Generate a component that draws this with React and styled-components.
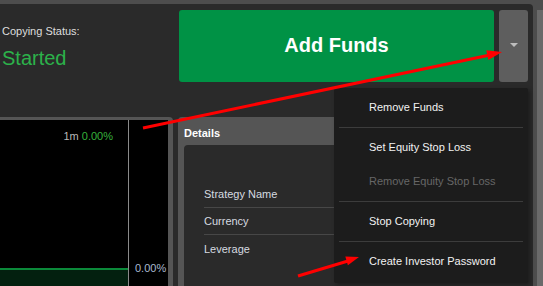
import styled, { createGlobalStyle } from 'styled-components';

const Global = createGlobalStyle`
  html, body {
    margin: 0;
    padding: 0;
    background: #4d4d4d;
    overflow: hidden;
    font-family: "Liberation Sans", Arial, sans-serif;
  }
`;

const Page = styled.div`
  position: relative;
  display: flex;
  width: 543px;
  height: 286px;
  padding-top: 4px;
  box-sizing: border-box;
`;

const Main = styled.div`
  width: 533px;
  background: #2a2a2a;
  border-radius: 0 4px 0 0;
  display: flex;
  flex-direction: column;
  overflow: hidden;
`;

const Scrollbar = styled.div`
  margin: 6px 0 0 4px;
  width: 6px;
  background: #6a6a6a;
`;

const TopRow = styled.div`
  display: flex;
  height: 113px;
`;

const Status = styled.div`
  width: 177px;
  padding: 21px 0 0 2px;
  display: flex;
  flex-direction: column;
  gap: 9px;
`;

const StatusLabel = styled.div`
  font-size: 11px;
  line-height: 13px;
  color: #dedede;
`;

const StatusValue = styled.div`
  font-size: 20px;
  line-height: 22px;
  color: #2cb24a;
`;

const Actions = styled.div`
  display: flex;
  gap: 5px;
  padding-top: 6px;
  height: 72px;
`;

const AddButton = styled.button`
  width: 315px;
  height: 72px;
  border: none;
  border-radius: 3px;
  background: #009245;
  color: #fff;
  font-family: inherit;
  font-size: 20px;
  font-weight: bold;
  display: flex;
  align-items: center;
  justify-content: center;
  padding: 0 0 2px;
`;

const ToggleButton = styled.button`
  width: 29px;
  height: 72px;
  border: none;
  border-radius: 3px;
  background: #5e5e5e;
  display: flex;
  align-items: center;
  justify-content: center;
  padding: 0 0 2px;
`;

const Caret = styled.span`
  width: 0;
  height: 0;
  border-left: 4px solid transparent;
  border-right: 4px solid transparent;
  border-top: 4px solid #bdbdbd;
`;

const BottomRow = styled.div`
  flex: 1;
  display: flex;
  gap: 5px;
`;

const ChartPanel = styled.div`
  width: 173px;
  background: #555;
  padding: 3px 5px 0 0;
  box-sizing: border-box;
  border-radius: 0 4px 0 0;
  display: flex;
`;

const Plot = styled.div`
  width: 128px;
  background: #000;
  border-right: 1px solid #8a8a8a;
  display: flex;
  flex-direction: column;
`;

const PlotLabel = styled.div`
  text-align: right;
  padding: 10px 15px 0 0;
  font-size: 11px;
  line-height: 13px;
  color: #b8b8b8;
  flex: 1;
`;

const Up = styled.span`
  color: #37b23c;
`;

const Area = styled.div`
  height: 16px;
  border-top: 2px solid #0b8a3a;
  background: #03200f;
`;

const Axis = styled.div`
  flex: 1;
  background: #000;
  display: flex;
  align-items: flex-end;
  padding: 0 0 11px 6px;
  font-size: 11px;
  line-height: 13px;
  color: #a9b9cf;
`;

const DetailsPanel = styled.div`
  flex: 1;
  margin-right: 5px;
  background: #555;
  border-radius: 4px 4px 0 0;
  display: flex;
  flex-direction: column;
`;

const DetailsHeader = styled.div`
  height: 28px;
  padding: 3px 0 0 6px;
  box-sizing: border-box;
  display: flex;
  align-items: center;
  font-size: 11px;
  font-weight: bold;
  color: #fff;
`;

const DetailsBody = styled.div`
  flex: 1;
  margin-left: 6px;
  background: #2a2a2a;
  border-radius: 4px 0 0 0;
  padding: 36px 0 0 20px;
`;

const DetailRow = styled.div`
  height: 27px;
  display: flex;
  align-items: center;
  font-size: 11px;
  color: #d6dae0;
  border-bottom: ${p => (p.last ? 'none' : '1px solid #474747')};
  box-sizing: border-box;
`;

const Menu = styled.div`
  position: absolute;
  left: 334px;
  top: 88px;
  width: 194px;
  background: #1c1c1c;
  border-radius: 2px;
  padding-bottom: 2px;
  box-shadow: 2px 2px 4px rgba(0, 0, 0, 0.35);
`;

const MenuGroup = styled.div`
  padding: 2px 0 3px;
`;

const MenuItem = styled.div`
  height: 34px;
  display: flex;
  align-items: center;
  padding-left: 35px;
  font-size: 11px;
  color: ${p => (p.disabled ? '#676767' : '#f2f2f2')};
`;

const Divider = styled.div`
  height: 1px;
  margin: 0 5px;
  background: #3c3c3c;
`;

const Annotations = styled.svg`
  position: absolute;
  left: 0;
  top: 0;
  pointer-events: none;
`;

const menu = [
  [{ label: 'Remove Funds' }],
  [{ label: 'Set Equity Stop Loss' }, { label: 'Remove Equity Stop Loss', disabled: true }],
  [{ label: 'Stop Copying' }],
  [{ label: 'Create Investor Password' }],
];

const details = ['Strategy Name', 'Currency', 'Leverage'];

export default function App() {
  return (
    <>
      <Global />
      <Page>
        <Main>
          <TopRow>
            <Status>
              <StatusLabel>Copying Status:</StatusLabel>
              <StatusValue>Started</StatusValue>
            </Status>
            <Actions>
              <AddButton>Add Funds</AddButton>
              <ToggleButton><Caret /></ToggleButton>
            </Actions>
          </TopRow>
          <BottomRow>
            <ChartPanel>
              <Plot>
                <PlotLabel>1m <Up>0.00%</Up></PlotLabel>
                <Area />
              </Plot>
              <Axis>0.00%</Axis>
            </ChartPanel>
            <DetailsPanel>
              <DetailsHeader>Details</DetailsHeader>
              <DetailsBody>
                {details.map((d, i) => (
                  <DetailRow key={d} last={i === details.length - 1}>{d}</DetailRow>
                ))}
              </DetailsBody>
            </DetailsPanel>
          </BottomRow>
        </Main>
        <Scrollbar />

        <Menu>
          {menu.map((group, i) => (
            <div key={i}>
              {i > 0 && <Divider />}
              <MenuGroup>
                {group.map(item => (
                  <MenuItem key={item.label} disabled={item.disabled}>{item.label}</MenuItem>
                ))}
              </MenuGroup>
            </div>
          ))}
        </Menu>

        <Annotations width="543" height="286" viewBox="0 0 543 286">
          <line x1="143" y1="128" x2="490" y2="55" stroke="#f00" strokeWidth="3" />
          <polygon points="502,52 488.3,60 486.3,50.2" fill="#f00" />
          <line x1="298" y1="276" x2="348" y2="261" stroke="#f00" strokeWidth="3" />
          <polygon points="359,257 347.9,265.2 345.3,256.6" fill="#f00" />
        </Annotations>
      </Page>
    </>
  );
}
